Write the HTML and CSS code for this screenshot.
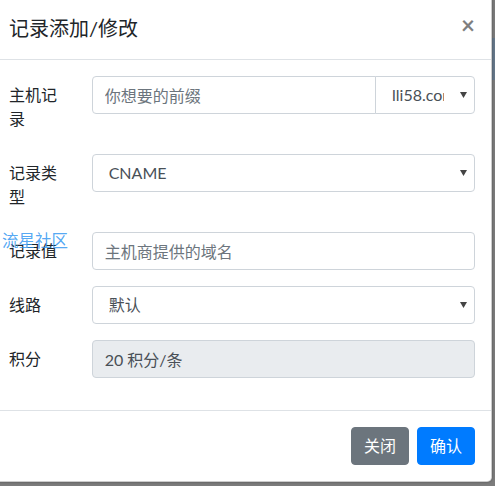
FILE: index.html
```html
<!DOCTYPE html>
<html lang="zh-CN">
<head>
<meta charset="utf-8">
<title>记录添加/修改</title>
<link rel="stylesheet" href="styles.css">
</head>
<body>
<div class="modal">
  <div class="modal-header">
    <h5 class="modal-title">记录添加/修改</h5>
    <button class="close" type="button">×</button>
  </div>
  <div class="modal-body">
    <div class="form-row">
      <label class="col-label">主机记录</label>
      <div class="input-group">
        <input class="form-control grow" type="text" placeholder="你想要的前缀">
        <select class="form-select append"><option>lli58.com</option></select>
      </div>
    </div>
    <div class="form-row">
      <label class="col-label">记录类型</label>
      <select class="form-select"><option>CNAME</option></select>
    </div>
    <div class="form-row">
      <label class="col-label">记录值</label>
      <input class="form-control" type="text" placeholder="主机商提供的域名">
    </div>
    <div class="form-row">
      <label class="col-label">线路</label>
      <select class="form-select"><option>默认</option></select>
    </div>
    <div class="form-row">
      <label class="col-label">积分</label>
      <input class="form-control readonly" type="text" value="20 积分/条" readonly>
    </div>
    <div class="watermark">流星社区</div>
  </div>
  <div class="modal-footer">
    <button class="btn btn-secondary" type="button">关闭</button>
    <button class="btn btn-primary" type="button">确认</button>
  </div>
</div>
</body>
</html>
```

FILE: styles.css
```css
* { box-sizing: border-box; }

html, body {
  margin: 0;
  height: 100%;
}

body {
  overflow: hidden;
  font-family: Lato, "Noto Sans CJK SC", sans-serif;
  font-size: 16px;
  font-weight: 400;
  line-height: 1.5;
  color: #212529;
  background: linear-gradient(to bottom, #7c7c7c 38px, #66788a 38px, #66788a 80px, #7c7c7c 80px);
}

.modal {
  width: 500px;
  margin-left: -8px;
  margin-top: -4px;
  background: #fff;
  border: 1px solid rgba(0, 0, 0, 0.2);
  border-radius: 4.8px;
  box-shadow: 0 0 3px rgba(0, 0, 0, 0.35);
}

.modal-header {
  display: flex;
  align-items: flex-start;
  justify-content: space-between;
  padding: 16px;
  border-bottom: 1px solid #dee2e6;
}

.modal-title {
  margin: 0;
  font-size: 20px;
  font-weight: 400;
  line-height: 1.5;
}

.close {
  padding: 16px;
  margin: -16px -16px -16px auto;
  background: transparent;
  border: 0;
  font-family: Lato, "Noto Sans CJK SC", sans-serif;
  font-size: 24px;
  font-weight: 700;
  line-height: 1;
  color: #000;
  opacity: 0.5;
  cursor: pointer;
}

.modal-body {
  position: relative;
  padding: 16px;
}

.form-row {
  display: grid;
  grid-template-columns: 52.67px 1fr;
  column-gap: 30px;
  margin-bottom: 16px;
}

.col-label {
  padding-top: 7px;
  padding-bottom: 7px;
  line-height: 1.5;
}

.input-group {
  display: flex;
}

.form-control,
.form-select {
  display: block;
  width: 100%;
  height: 38px;
  padding: 6px 12px;
  font-family: Lato, "Noto Sans CJK SC", sans-serif;
  font-size: 16px;
  line-height: 1.5;
  color: #495057;
  background-color: #fff;
  border: 1px solid #ced4da;
  border-radius: 4px;
  outline: none;
}

.form-control::placeholder {
  color: #6c757d;
  opacity: 1;
}

.form-control.readonly {
  background-color: #e9ecef;
}

.form-select {
  -webkit-appearance: none;
  appearance: none;
  padding-left: 16px;
  padding-right: 30px;
  background-image: url("data:image/svg+xml,%3Csvg xmlns='http://www.w3.org/2000/svg' width='7' height='6' viewBox='0 0 7 6'%3E%3Cpath d='M0 0h7L3.5 6z' fill='%23444'/%3E%3C/svg%3E");
  background-repeat: no-repeat;
  background-position: right 7px center;
  background-size: 7px 6px;
}

.grow {
  flex: 1 1 auto;
  width: 1%;
  border-top-right-radius: 0;
  border-bottom-right-radius: 0;
}

.append {
  flex: 0 0 100px;
  width: 100px;
  margin-left: -1px;
  border-top-left-radius: 0;
  border-bottom-left-radius: 0;
}

.watermark {
  position: absolute;
  left: 9px;
  top: 172px;
  font-size: 16.5px;
  line-height: 1.2;
  color: rgba(40, 145, 240, 0.8);
  pointer-events: none;
}

.modal-footer {
  display: flex;
  align-items: center;
  justify-content: flex-end;
  padding: 12px;
  border-top: 1px solid #dee2e6;
}

.btn {
  margin: 4px;
  padding: 6px 12px;
  font-family: Lato, "Noto Sans CJK SC", sans-serif;
  font-size: 16px;
  line-height: 1.5;
  color: #fff;
  border: 1px solid transparent;
  border-radius: 4px;
  cursor: pointer;
}

.btn-secondary {
  background-color: #6c757d;
  border-color: #6c757d;
}

.btn-primary {
  background-color: #007bff;
  border-color: #007bff;
}
```
